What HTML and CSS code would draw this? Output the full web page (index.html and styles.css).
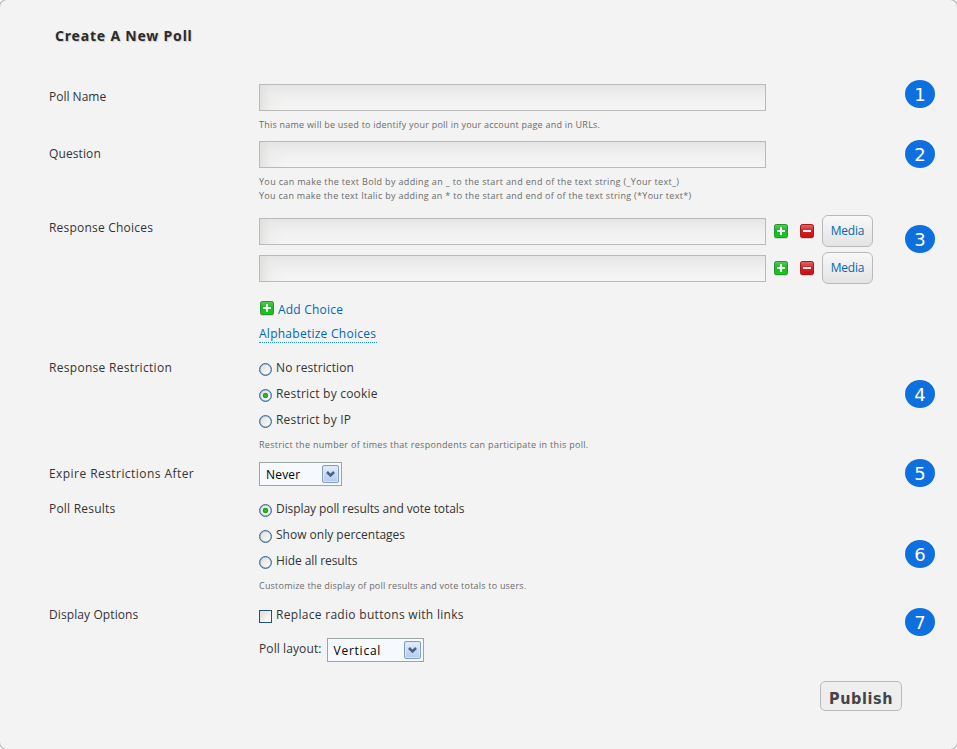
FILE: index.html
```html
<!DOCTYPE html>
<html lang="en">
<head>
<meta charset="utf-8">
<title>Create A New Poll</title>
<link rel="stylesheet" href="styles.css">
</head>
<body>
<svg width="0" height="0" class="defs">
  <defs>
    <linearGradient id="green" x1="0" y1="0" x2="0" y2="1"><stop offset="0" stop-color="#5cc95c"/><stop offset=".45" stop-color="#22b52c"/><stop offset="1" stop-color="#10cc18"/></linearGradient>
    <linearGradient id="red" x1="0" y1="0" x2="0" y2="1"><stop offset="0" stop-color="#e56a6a"/><stop offset=".5" stop-color="#cf2226"/><stop offset="1" stop-color="#c90f12"/></linearGradient>
    <symbol id="plus" viewBox="0 0 14 15"><rect x="0" y="1" width="14" height="14" rx="2" fill="#d5d5d5"/><rect x=".5" y=".5" width="13" height="13" rx="1.8" fill="url(#green)" stroke="#23962b"/><path d="M7 3v8M3 7h8" stroke="#efefef" stroke-width="2"/></symbol>
    <symbol id="minus" viewBox="0 0 14 15"><rect x="0" y="1" width="14" height="14" rx="2" fill="#d5d5d5"/><rect x=".5" y=".5" width="13" height="13" rx="1.8" fill="url(#red)" stroke="#a8181c"/><path d="M3 7h8" stroke="#efefef" stroke-width="2"/></symbol>
  </defs>
</svg>
<main class="panel">
  <h1 class="title">Create A New Poll</h1>
  <section class="row name">
    <div class="label">Poll Name</div>
    <div><div class="field"></div><p class="hint t-name">This name will be used to identify your poll in your account page and in URLs.</p></div>
    <span class="badge">1</span>
  </section>
  <section class="row question">
    <div class="label t1">Question</div>
    <div><div class="field"></div><p class="hint t-bold">You can make the text Bold by adding an _ to the start and end of the text string (_Your text_)</p><p class="hint next t3">You can make the text Italic by adding an * to the start and end of of the text string (*Your text*)</p></div>
    <span class="badge">2</span>
  </section>
  <section class="row choices">
    <div class="label t2">Response Choices</div>
    <div>
      <div class="choice"><div class="field"></div><svg class="icon"><use href="#plus"/></svg><svg class="icon"><use href="#minus"/></svg><span class="media">Media</span></div>
      <div class="choice"><div class="field"></div><svg class="icon"><use href="#plus"/></svg><svg class="icon"><use href="#minus"/></svg><span class="media">Media</span></div>
      <div class="add"><svg class="icon"><use href="#plus"/></svg><a class="t2">Add Choice</a></div>
      <a class="alpha">Alphabetize Choices</a>
    </div>
    <span class="badge">3</span>
  </section>
  <section class="row restriction">
    <div class="label t3">Response Restriction</div>
    <div>
      <div class="option"><i class="radio"></i><span class="t1">No restriction</span></div>
      <div class="option"><i class="radio on"></i><span class="t2">Restrict by cookie</span></div>
      <div class="option"><i class="radio"></i><span class="t2">Restrict by IP</span></div>
      <p class="hint t3">Restrict the number of times that respondents can participate in this poll.</p>
    </div>
    <span class="badge">4</span>
  </section>
  <section class="row expire">
    <div class="label t4">Expire Restrictions After</div>
    <div><span class="select never"><span>Never</span><i class="arrow"><svg viewBox="0 0 9 7"><path d="M1 1l3.5 3.5L8 1" fill="none" stroke="#4d6185" stroke-width="2.6"/></svg></i></span></div>
    <span class="badge">5</span>
  </section>
  <section class="row results">
    <div class="label t2">Poll Results</div>
    <div>
      <div class="option"><i class="radio on"></i><span class="tn">Display poll results and vote totals</span></div>
      <div class="option"><i class="radio"></i><span>Show only percentages</span></div>
      <div class="option"><i class="radio"></i><span class="tn">Hide all results</span></div>
      <p class="hint t2">Customize the display of poll results and vote totals to users.</p>
    </div>
    <span class="badge">6</span>
  </section>
  <section class="row display">
    <div class="label t1">Display Options</div>
    <div>
      <div class="option"><i class="check"></i><span class="t3">Replace radio buttons with links</span></div>
      <div class="layout"><span class="t1">Poll layout:</span><span class="select vertical"><span>Vertical</span><i class="arrow"><svg viewBox="0 0 9 7"><path d="M1 1l3.5 3.5L8 1" fill="none" stroke="#4d6185" stroke-width="2.6"/></svg></i></span></div>
    </div>
    <span class="badge">7</span>
  </section>
  <div class="publish">Publish</div>
</main>
</body>
</html>
```
FILE: styles.css
```css
* { box-sizing: border-box; }
body { margin: 0; overflow: hidden; background: #fff; color: #333; font: 12px/26px "Open Sans", "Noto Sans", sans-serif; white-space: nowrap; }
.defs { display: block; }
.panel { height: 749px; padding: 23px 22px 0 49px; background: #f3f3f3; border-radius: 7px; box-shadow: 0 0 0 1px #b5b5b5; display: flex; flex-direction: column; }
.title { margin: 0 0 31px 6px; height: 26px; font: bold 14px/26px "Noto Sans", "Open Sans", sans-serif; letter-spacing: .8px; color: #2b2b2b; text-shadow: 1px 1px 1px #ccc; }
.row { display: grid; grid-template-columns: 210px 1fr 30px; align-items: start; }
.name { height: 57px; padding-top: 4px; }
.question { height: 74px; padding-top: 4px; }
.choices { height: 144px; padding-top: 4px; }
.restriction { height: 104px; }
.expire { height: 37px; }
.results { height: 106px; }
.display { height: 79px; }
.expire .label { padding-top: 2px; }
.field { width: 507px; height: 27px; border: 1px solid #b9b9b9; background: linear-gradient(to right, rgba(222,222,220,.8) 0, rgba(232,232,230,.4) 10px, rgba(240,240,240,0) 24px), linear-gradient(#e5e5e5, #f0f0f0 12px, #f5f5f4); }
.choice .field { margin-top: 1px; }
.hint { margin: 7px 0 0; font-size: 9px; line-height: 14px; color: #6b6b6b; }
.hint.next { margin-top: 0; }
.restriction .hint, .results .hint { margin-top: 5px; }
.t-name { letter-spacing: .23px; }
.t-bold { letter-spacing: .34px; }
.tn { letter-spacing: -.08px; }
.t1 { letter-spacing: .1px; }
.t2 { letter-spacing: .21px; }
.t3 { letter-spacing: .3px; }
.t4 { letter-spacing: .44px; }
.badge { width: 30px; height: 28px; border-radius: 50%; background: #0e6fde; color: #fff; font: 18px/29px "DejaVu Sans", sans-serif; text-align: center; }
.name .badge { margin-top: -4px; }
.question .badge { margin-top: -1px; }
.choices .badge { margin-top: 10px; }
.restriction .badge { margin-top: 25px; }
.results .badge { margin-top: 44px; }
.display .badge { margin-top: 6px; }
.choice { display: flex; align-items: center; height: 32px; margin-bottom: 5px; }
.icon { width: 14px; height: 15px; flex: none; }
.choice .icon { margin-left: 8px; }
.choice .icon + .icon { margin-left: 12px; }
.media { width: 51px; height: 32px; margin-left: 8px; border: 1px solid #b9b9b9; border-radius: 6px; background: linear-gradient(#f8f8f8, #e3e3e3); color: #0068b3; line-height: 30px; text-align: center; letter-spacing: -.2px; }
.add { display: flex; align-items: center; height: 26px; margin-top: 13px; padding-left: 1px; color: #0068b3; }
.add .icon { margin: -3px 4px 0 0; }
.alpha { display: block; width: 118px; height: 17px; margin-top: 3px; line-height: 15px; color: #0068b3; letter-spacing: .26px; border-bottom: 1px dotted #2391d5; }
.option { display: flex; align-items: center; height: 26px; }
.radio { width: 13px; height: 13px; margin: 3px 4px 0 0; border: 1px solid #386898; border-radius: 50%; background: linear-gradient(135deg, #dcdcd7, #fff); box-shadow: inset 0 0 0 .5px #7d9dbb; }
.radio.on { background: radial-gradient(circle, #35c435 0, #20a020 2.4px, transparent 3.1px), linear-gradient(135deg, #dcdcd7, #fff); }
.check { width: 13px; height: 13px; margin: 3px 4px 0 0; border: 1px solid #1d5180; background: linear-gradient(135deg, #dcdcd7, #fff); }
.select { display: flex; justify-content: space-between; align-items: center; height: 24px; padding: 0 2px 0 6px; border: 1px solid #9da5a1; background: #f6faff; color: #000; }
.select > span { padding-top: 2px; }
.never { width: 83px; margin-top: 3px; letter-spacing: .2px; }
.vertical { width: 97px; margin-left: 5px; letter-spacing: .75px; }
.arrow { display: flex; align-items: center; justify-content: center; width: 17px; height: 18px; border: 1px solid #829cc6; border-radius: 2px; background: linear-gradient(#e4edfb, #b3c9ec); box-shadow: inset 0 0 0 1px #dbe6f8; }
.arrow svg { width: 9px; height: 7px; }
.layout { display: flex; margin-top: 10px; }
.layout > .t1 { line-height: 22px; }
.publish { width: 82px; height: 30px; margin-left: 771px; border: 1px solid #b9b9b9; border-radius: 5px; background: #eee; color: #444; font: bold 16px/33px "DejaVu Sans Condensed", "DejaVu Sans", sans-serif; letter-spacing: .6px; text-align: center; }
```
